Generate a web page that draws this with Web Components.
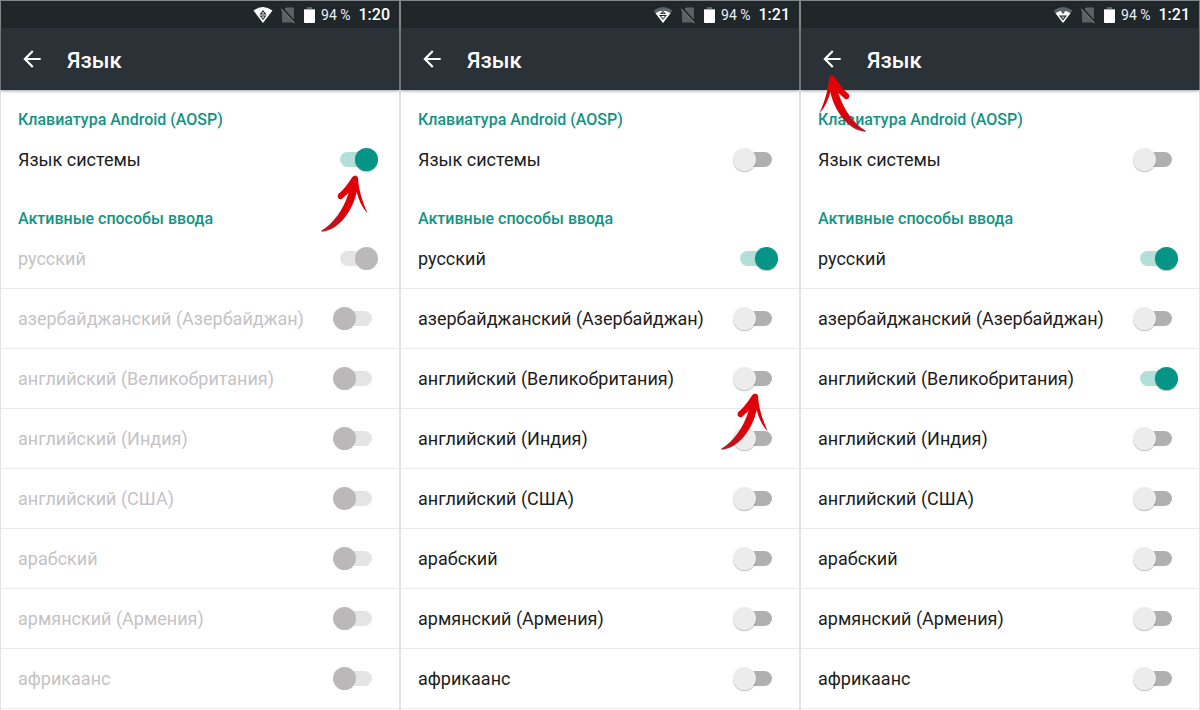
<!DOCTYPE html>
<html lang="ru">
<head>
<meta charset="utf-8">
<meta name="viewport" content="width=device-width, initial-scale=1">
<title>Язык</title>
<style>
  body { margin: 0; background: #fff; font-family: Roboto, "Noto Sans", sans-serif; }
</style>
</head>
<body>
<language-guide></language-guide>

<script>
const define = (name, html, setup) => {
  const template = document.createElement('template');
  template.innerHTML = html;
  customElements.define(name, class extends HTMLElement {
    connectedCallback() {
      if (this.shadowRoot) return;
      const root = this.attachShadow({ mode: 'open' });
      root.append(template.content.cloneNode(true));
      if (setup) setup(this, root);
    }
  });
};

/* Status bar: wifi, missing SIM, battery and clock */
define('status-bar', `
  <style>
    :host { display: flex; align-items: center; justify-content: flex-end; height: 27px; padding-right: 9px; background: #20272b; color: #fff; }
    svg { display: block; flex: none; }
    .wifi { width: 20px; height: 18px; margin-right: 8px; }
    .sim { width: 14px; height: 18px; margin-right: 9px; }
    .battery { width: 11px; height: 18px; margin-right: 6px; }
    .charge { font-size: 14px; line-height: 20px; margin-right: 8px; color: #eceeef; }
    time { font-size: 16px; line-height: 20px; font-weight: 500; }
    .charge, time { padding-top: 1px; }
    .weak { display: none; }
    :host([signal="weak"]) .full, :host([signal="receiving"]) .full { display: none; }
    :host([signal="weak"]) .weak, :host([signal="receiving"]) .weak { display: inline; }
    .down { display: none; }
    :host([signal="receiving"]) .down { display: inline; }
    :host([signal="receiving"]) .up { display: none; }
  </style>
  <svg class="wifi" viewBox="0 0 20 18" aria-hidden="true">
    <g class="full">
      <path fill="#fff" d="M.5 4.500Q10-2.500 19.500 4.500L10 17Z"/>
      <path fill="#20272b" d="M10 4L13.500 8.500H6.500ZM6.500 9.500H13.500L10 14Z"/>
      <path fill="#fff" d="M10 5.800L11.400 7.600H8.600ZM8.500 10.400H11.500L10 12.400Z"/>
    </g>
    <g class="weak">
      <path fill="#5d6366" d="M.5 4.500Q10-2.500 19.500 4.500L10 17Z"/>
      <path fill="#fff" d="M2.500 7.200Q10 2.500 17.500 7.200L10 17Z"/>
      <path class="up" fill="#20272b" d="M10 4.800L13 8H7ZM6 9H14L10 13.800Z"/>
      <path class="up" fill="#fff" d="M10 6L11 7.200H9ZM8 10H12L10 12.500Z"/>
      <path class="down" fill="#5d6366" d="M7.500 3.500H12.500L11 7.500H9Z"/>
      <path class="down" fill="#20272b" d="M6 9.500H14L10 14.500Z"/>
      <path class="down" fill="#aeb2b4" d="M8 10.500H12L10 13Z"/>
    </g>
  </svg>
  <svg class="sim" viewBox="0 0 14 18" aria-hidden="true">
    <path fill="#5b6164" d="M5 1.500H12Q13 1.500 13 2.500V15.500Q13 16.500 12 16.500H2Q1 16.500 1 15.500V5.500Z"/>
    <path stroke="#20272b" stroke-width="2" d="M1 2L14 16"/>
    <path stroke="#6b7174" stroke-width="1.300" d="M0 3L13.500 17"/>
  </svg>
  <svg class="battery" viewBox="0 0 11 18" aria-hidden="true">
    <path fill="#5b6164" d="M3 1H8V3H11V4H0V3H3Z"/>
    <path fill="#fff" d="M0 3.500H11V16Q11 17 10 17H1Q0 17 0 16Z"/>
  </svg>
  <span class="charge">94 %</span>
  <time></time>
`, (host, root) => { root.querySelector('time').textContent = host.getAttribute('time'); });

define('app-bar', `
  <style>
    :host { display: flex; align-items: center; height: 62px; padding-left: 18px; background: #2a3137; color: #fff; box-shadow: 0 1px 3px rgba(20, 25, 50, .4); position: relative; }
    button { display: block; width: 26px; height: 26px; margin: 0 22px 0 0; padding: 0; border: 0; background: none; color: inherit; cursor: pointer; }
    svg { display: block; width: 26px; height: 26px; }
    h1 { margin: 0; font-size: 22px; line-height: 28px; font-weight: 500; padding-top: 4px; }
  </style>
  <button type="button" aria-label="Назад">
    <svg viewBox="0 0 24 24" fill="currentColor" aria-hidden="true"><path d="M20 11H7.800l5.600-5.600L12 4l-8 8 8 8 1.400-1.400L7.800 13H20v-2z"/></svg>
  </button>
  <h1><slot></slot></h1>
`);

define('section-title', `
  <style>
    :host { display: block; padding: 20px 18px 0 17px; color: #149383; }
    h2 { margin: 0; font-size: 16px; line-height: 20px; font-weight: 500; }
  </style>
  <h2><slot></slot></h2>
`);

define('switch-row', `
  <style>
    :host { display: block; border-bottom: 1px solid #e9e9eb; color: #1c1c1c; }
    :host([plain]) { border-bottom: 0; }
    :host([disabled]) { color: #c5c2c5; }
    label { display: flex; align-items: center; justify-content: space-between; height: 59px; padding: 0 21px 0 17px; font-size: 18px; line-height: 24px; }
    input { appearance: none; position: relative; flex: none; width: 45px; height: 23px; margin: 0 0 1px; }
    input::before, input::after { content: ""; position: absolute; }
    input::before { left: 7px; top: 4px; width: 32px; height: 15px; border-radius: 8px; background: #b0b0b0; }
    input::after { left: 0; top: 0; width: 23px; height: 23px; border-radius: 50%; background: #ececec; box-shadow: 0 1px 1px rgba(0, 0, 0, .25); }
    input:checked::before { background: #b2dfda; }
    input:checked::after { left: 22px; background: #059587; }
    input:disabled::before { background: #e5e4e5; }
    input:disabled::after { background: #bab8b9; box-shadow: none; }
  </style>
  <label><span><slot></slot></span><input type="checkbox" role="switch"></label>
`, (host, root) => {
  const input = root.querySelector('input');
  input.checked = host.hasAttribute('checked');
  input.disabled = host.hasAttribute('disabled');
});

/* Hand-drawn red arrow that points at a control */
define('hint-arrow', `
  <style>
    :host { display: block; position: absolute; width: 50px; height: 60px; pointer-events: none; }
    :host([mirrored]) svg { transform: scaleX(-1); }
    svg { display: block; width: 50px; height: 60px; }
  </style>
  <svg viewBox="55 100 150 180" aria-hidden="true">
    <defs><linearGradient id="ink" x1="0" y1="0" x2="0" y2="1"><stop offset=".6" stop-color="#e00008"/><stop offset="1" stop-color="#b01c28"/></linearGradient></defs>
    <path fill="url(#ink)" d="M62 273C98 252 128 210 144 160C138 164 132 171 125 177Q118 181 113 176Q108 170 113 163C130 150 145 128 155 112Q165 102 172 114C173 145 184 183 201 221C184 204 174 180 168 157C158 205 120 272 62 276Z"/>
  </svg>
`);

define('phone-screen', `
  <style>
    :host { display: block; position: relative; box-sizing: border-box; min-width: 0; overflow: hidden; background: #fff; }
    header { border: 1px solid #80868a; border-bottom: 0; }
    main { border: 1px solid #e4e4e7; border-width: 0 1px; min-height: 620px; }
  </style>
  <header><slot name="header"></slot></header>
  <main><slot></slot></main>
  <slot name="hint"></slot>
`);

const LANGUAGES = ['русский', 'азербайджанский (Азербайджан)', 'английский (Великобритания)', 'английский (Индия)', 'английский (США)', 'арабский', 'армянский (Армения)', 'африкаанс'];
const SCREENS = [
  { time: '1:20', signal: 'full', system: true, on: [0], hint: 'first' },
  { time: '1:21', signal: 'weak', system: false, on: [0], hint: 'second' },
  { time: '1:21', signal: 'receiving', system: false, on: [0, 2], hint: 'third' }
];

const screenMarkup = s => `
  <phone-screen>
    <status-bar slot="header" time="${s.time}" signal="${s.signal}"></status-bar>
    <app-bar slot="header">Язык</app-bar>
    <section-title>Клавиатура Android (AOSP)</section-title>
    <switch-row plain ${s.system ? 'checked' : ''}>Язык системы</switch-row>
    <section-title>Активные способы ввода</section-title>
    ${LANGUAGES.map((name, i) => `<switch-row ${s.on.includes(i) ? 'checked' : ''} ${s.system ? 'disabled' : ''}>${name}</switch-row>`).join('')}
    <hint-arrow slot="hint" class="${s.hint}" ${s.hint === 'third' ? 'mirrored' : ''}></hint-arrow>
  </phone-screen>`;

define('language-guide', `
  <style>
    :host { display: grid; grid-template-columns: repeat(3, minmax(0, 1fr)); min-height: 100vh; }
    .first, .second { right: 31px; }
    .first { top: 173px; }
    .second { top: 391px; }
    .third { left: 18px; top: 73px; }
  </style>
  ${SCREENS.map(screenMarkup).join('')}
`);
</script>
</body>
</html>
